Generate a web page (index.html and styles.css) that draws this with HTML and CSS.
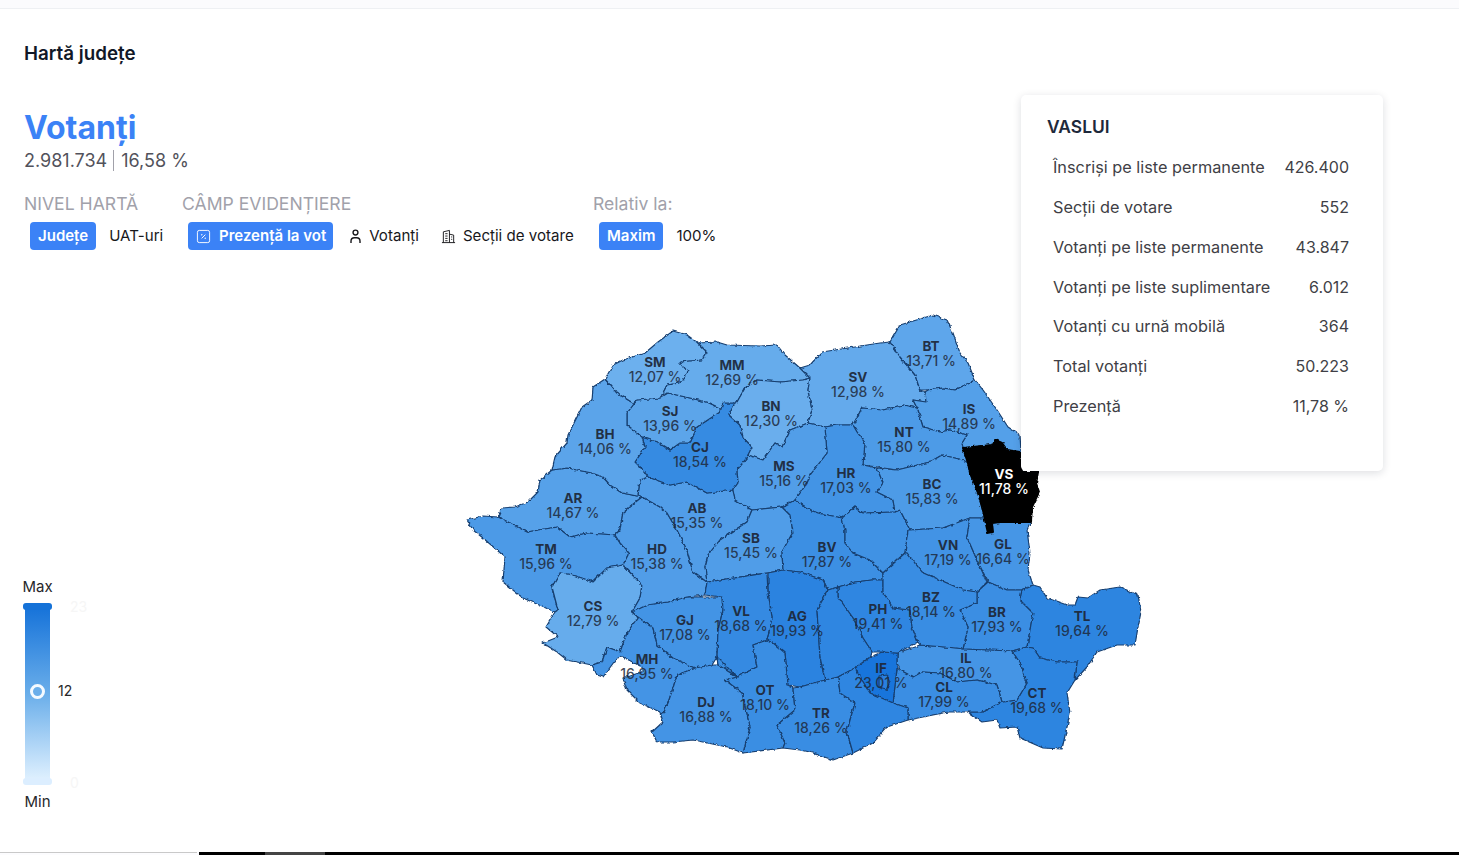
FILE: index.html
```html
<!DOCTYPE html>
<html lang="ro">
<head>
<meta charset="utf-8">
<title>Hartă județe</title>
<link rel="stylesheet" href="styles.css">
</head>
<body>
<div class="page">
  <div class="topstrip"></div>
  <h2 class="page-title">Hartă județe</h2>
  <section class="summary">
    <h1 class="summary-title">Votanți</h1>
    <p class="summary-sub">2.981.734<span class="sep"></span>16,58 %</p>
  </section>
  <section class="filters">
    <div class="group group-level">
      <div class="group-label">NIVEL HARTĂ</div>
      <div class="group-btns">
        <span class="btn active">Județe</span>
        <span class="btn">UAT-uri</span>
      </div>
    </div>
    <div class="group group-field">
      <div class="group-label">CÂMP EVIDENȚIERE</div>
      <div class="group-btns">
        <span class="btn active btn-icon"><svg class="ico" viewBox="0 0 16 16" fill="none" stroke="currentColor" stroke-width="1"><rect x="1.5" y="1.5" width="13" height="13" rx="2"/><path d="M10 6 6 10"/><circle cx="6.2" cy="6.2" r=".4"/><circle cx="9.8" cy="9.8" r=".4"/></svg>Prezență la vot</span>
        <span class="btn"><svg class="ico" viewBox="0 0 16 16" fill="none" stroke="currentColor" stroke-width="1.5"><circle cx="8" cy="3.8" r="2.6"/><path d="M3.2 15v-2a3.6 3.6 0 0 1 3.6-3.6h2.4a3.6 3.6 0 0 1 3.6 3.6v2"/></svg>Votanți</span>
        <span class="btn"><svg class="ico" viewBox="0 0 16 16" fill="none" stroke="currentColor" stroke-width="1"><path d="M1 14.5h14M2.5 14.5V3l6.500-1.500v13M9 5.500l4.500 1v8M4.500 5h2.500M4.500 7.500h2.500M4.500 10h2.500M4.500 12.500h2.500M10.800 8.500h1.200M10.800 11h1.200"/></svg>Secții de votare</span>
      </div>
    </div>
    <div class="group group-rel">
      <div class="group-label">Relativ la:</div>
      <div class="group-btns">
        <span class="btn active">Maxim</span>
        <span class="btn">100%</span>
      </div>
    </div>
  </section>
  <main class="stage">
    <aside class="legend">
      <div class="legend-cap">Max</div>
      <div class="legend-bar">
        <span class="handle handle-top"></span>
        <span class="tick tick-max">23</span>
        <span class="thumb"></span>
        <span class="tick tick-val">12</span>
        <span class="handle handle-bot"></span>
        <span class="tick tick-min">0</span>
      </div>
      <div class="legend-cap legend-min">Min</div>
    </aside>
    <svg class="map" viewBox="460 310 690 460" width="690" height="460" role="img" aria-label="Harta României pe județe">
      <defs>
        <filter id="rough" x="-2%" y="-2%" width="104%" height="104%" color-interpolation-filters="sRGB">
          <feTurbulence type="fractalNoise" baseFrequency="0.22" numOctaves="2" seed="4"/>
          <feColorMatrix type="matrix" values="1 0 0 0 0  0 1 0 0 0  0 0 1 0 0  0 0 0 0 1" result="noise"/>
          <feDisplacementMap in="SourceGraphic" in2="noise" scale="3.5" xChannelSelector="R" yChannelSelector="G"/>
        </filter>
      </defs>
      <g class="counties" filter="url(#rough)">
        <polygon fill="#56a1e9" points="498,517 502,508 515,507 528,502 538,492 540,480 552,470 567,468 592,473 603,477 610,485 622,493 642,497 623,512 620,530 615,535 587,533 570,537 557,527 527,532 500,518"/>
        <polygon fill="#4c9ae7" points="467,520 483,516 498,517 500,518 527,532 557,527 570,537 587,533 615,535 620,543 629,553 623,565 607,568 593,582 573,575 560,573 552,587 558,610 555,612 523,598 503,582 505,557 483,538 473,530"/>
        <polygon fill="#66acec" points="555,612 558,610 552,587 560,573 573,575 593,582 607,568 623,565 642,585 640,598 632,612 638,617 627,633 620,652 607,647 602,662 592,665 567,660 557,652 543,643 558,637 546,627"/>
        <polygon fill="#4494e5" points="592,665 602,662 607,647 620,652 627,633 638,617 653,628 657,645 673,658 695,668 677,675 673,688 668,703 663,713 660,712 640,703 627,690 623,678 642,672 642,667 623,657 617,658 603,677 597,675"/>
        <polygon fill="#4394e5" points="632,612 647,605 667,602 687,597 722,597 723,610 718,630 717,657 712,665 695,668 673,658 657,645 653,628 638,617"/>
        <polygon fill="#519de8" points="642,497 660,507 667,513 677,530 687,550 693,572 707,582 705,595 687,597 667,602 647,605 632,612 640,598 642,585 623,565 629,553 620,543 615,535 620,530 623,512"/>
        <polygon fill="#519de8" points="642,497 638,495 640,480 648,477 670,485 687,482 707,493 733,490 735,500 752,510 747,522 720,540 708,555 705,567 707,582 693,572 687,550 677,530 667,513 660,507"/>
        <polygon fill="#368be2" points="642,437 657,442 670,450 680,443 690,443 697,427 720,412 723,403 735,403 729,415 740,425 743,437 752,447 747,458 737,470 738,483 733,490 707,493 687,482 670,485 648,477 643,470 635,462 645,447"/>
        <polygon fill="#5ca5ea" points="642,437 627,425 627,413 637,400 660,398 668,393 690,398 707,402 720,408 720,412 697,427 690,443 680,443 670,450 657,442"/>
        <polygon fill="#5ba4ea" points="552,470 555,457 567,443 568,435 582,407 592,400 593,387 605,379 617,393 633,403 637,400 627,413 627,425 642,437 645,447 635,462 643,470 648,477 640,480 638,495 642,497 622,493 610,485 603,477 592,473 567,468"/>
        <polygon fill="#6cb0ee" points="605,379 613,365 623,360 645,353 658,342 673,331 687,335 698,343 707,352 702,360 680,362 688,372 680,383 667,385 662,395 660,398 637,400 633,403 617,393"/>
        <polygon fill="#66acec" points="698,343 717,342 727,345 760,346 777,345 785,355 800,368 810,378 803,380 780,382 757,380 745,388 737,402 735,403 723,403 720,408 707,402 690,398 668,393 662,395 667,385 680,383 688,372 680,362 702,360 707,352"/>
        <polygon fill="#6aaeed" points="757,380 780,382 803,380 810,378 808,390 812,410 808,423 790,430 782,447 775,443 763,460 748,455 752,447 743,437 740,425 729,415 735,403 737,402 745,388"/>
        <polygon fill="#64aaec" points="800,368 810,365 822,352 880,343 890,342 900,357 915,375 920,390 925,392 926,402 913,400 917,408 903,405 883,410 862,408 853,425 837,425 825,427 808,423 812,410 808,390 810,378"/>
        <polygon fill="#5ea6eb" points="890,342 900,325 933,315 947,320 953,333 960,353 968,363 975,380 955,390 943,388 928,390 920,390 915,375 900,357"/>
        <polygon fill="#54a0e9" points="975,380 983,390 997,410 1008,427 1020,435 1021,452 1007,450 1002,443 995,440 992,445 963,448 962,443 967,435 950,430 940,432 923,427 917,408 913,400 926,402 925,392 928,390 943,388 955,390"/>
        <polygon fill="#4d9be7" points="862,408 883,410 903,405 917,408 923,427 940,432 950,430 967,435 962,443 963,448 968,463 963,460 942,455 930,462 897,470 877,467 863,465 865,443 857,432 853,425"/>
        <polygon fill="#4394e5" points="825,427 837,425 853,425 857,432 865,443 863,465 877,468 883,483 877,492 893,500 895,512 863,513 855,507 842,518 818,513 810,510 795,500 807,483 810,475 827,453"/>
        <polygon fill="#529ee8" points="748,455 763,460 775,443 782,447 790,430 808,423 825,427 827,453 810,475 807,483 795,500 782,507 752,510 735,500 733,490 738,483 737,470 747,458"/>
        <polygon fill="#509de8" points="752,510 782,507 790,515 793,532 782,552 783,570 767,573 707,582 705,567 708,555 720,540 747,522"/>
        <polygon fill="#3c8fe3" points="782,507 795,500 810,510 818,513 842,518 845,530 845,543 853,553 870,560 883,573 883,580 872,580 855,582 838,587 828,590 823,580 800,572 783,570 782,552 793,532 790,515"/>
        <polygon fill="#4092e4" points="855,507 863,513 895,512 900,510 910,530 908,530 905,553 883,573 870,560 853,553 845,543 845,530 842,518"/>
        <polygon fill="#4d9be7" points="877,468 897,470 930,462 942,455 963,460 968,463 970,473 978,493 982,507 985,518 970,518 943,528 910,530 900,510 895,512 893,500 877,492 883,483"/>
        <polygon fill="#4293e5" points="910,530 943,528 970,518 967,537 977,560 987,582 977,592 963,590 940,580 922,572 907,553 905,553 908,530"/>
        <polygon fill="#4696e6" points="970,518 985,518 992,523 1000,522 1031,522 1027,530 1030,553 1028,570 1033,585 1022,590 1007,590 988,582 977,560 967,537"/>
        <polygon fill="#3b8ee3" points="988,582 1007,590 1022,590 1020,600 1033,613 1030,630 1027,647 1012,651 963,649 968,627 960,610 977,603 977,592"/>
        <polygon fill="#2d85e0" points="1033,585 1040,587 1047,598 1067,605 1075,605 1078,597 1088,598 1100,590 1120,587 1138,595 1141,612 1138,627 1135,645 1117,645 1097,652 1087,667 1075,680 1077,662 1057,662 1040,658 1033,648 1027,647 1030,630 1033,613 1020,600 1022,590"/>
        <polygon fill="#2d85e0" points="1012,651 1027,647 1033,648 1040,658 1057,662 1077,662 1075,680 1067,693 1070,713 1067,727 1062,749 1043,748 1020,738 1017,727 1000,728 997,720 982,722 968,712 982,712 1002,702 1017,700 1027,683 1020,663"/>
        <polygon fill="#4595e5" points="897,653 920,645 957,648 963,649 1012,651 1020,663 1027,683 1017,700 1002,702 997,685 977,680 957,682 940,673 922,672 913,677 900,670 897,663"/>
        <polygon fill="#3b8ee3" points="897,668 900,670 913,677 922,672 940,673 957,682 977,680 997,685 1002,702 982,712 968,712 948,712 908,720 908,708 893,703"/>
        <polygon fill="#1875dc" points="855,668 870,657 882,652 897,653 897,668 893,703 870,693 860,677"/>
        <polygon fill="#2a80e0" points="879,676 887,675 890,682 886,690 879,688"/>
        <polygon fill="#2f86e1" points="838,587 855,582 872,580 883,580 883,592 893,608 910,610 912,627 918,642 897,653 882,652 872,652 863,638 853,618 838,597"/>
        <polygon fill="#398de3" points="883,580 883,573 905,553 907,553 922,572 940,580 963,590 977,592 977,603 960,610 968,627 963,649 957,648 920,645 918,642 912,627 910,610 893,608 883,592"/>
        <polygon fill="#2b83e0" points="768,573 783,570 800,572 823,580 828,590 817,610 820,657 825,680 800,687 788,685 785,653 772,642 767,640 772,617 768,593"/>
        <polygon fill="#358ae2" points="707,582 767,573 768,593 772,617 767,640 753,645 757,667 737,677 718,665 717,657 718,630 723,610 722,597 705,595"/>
        <polygon fill="#3a8ee3" points="717,657 718,665 737,677 757,667 753,645 767,640 772,642 785,653 788,685 793,688 795,710 777,725 785,743 783,748 743,753 750,727 742,693 725,680 737,677"/>
        <polygon fill="#4494e5" points="695,668 712,665 718,665 737,677 725,680 742,693 750,727 743,753 727,747 693,740 673,742 657,742 652,732 663,722 660,712 663,713 668,703 673,688 677,675"/>
        <polygon fill="#398de3" points="793,688 800,687 825,680 838,677 840,693 855,703 850,720 847,732 853,753 833,760 813,753 800,750 783,748 785,743 777,725 795,710"/>
        <polygon fill="#2f86e1" points="828,590 838,587 838,597 853,618 863,638 872,652 870,657 855,668 838,677 825,680 820,657 817,610"/>
        <polygon fill="#2f86e1" points="838,677 855,668 860,677 870,693 893,703 908,708 908,720 887,727 873,743 853,753 847,732 850,720 855,703 840,693"/>
        <polygon class="selected" points="963,448 992,445 995,440 1002,443 1007,450 1020,452 1022,472 1038,472 1036,483 1039,492 1032,507 1031,522 1000,522 992,523 993,532 988,533 985,520 982,507 978,493 970,473 968,463"/>
      </g>
      <g class="labels">
        <text x="655" y="367" class="code">SM</text><text x="655" y="382">12,07 %</text>
        <text x="732" y="370" class="code">MM</text><text x="732" y="385">12,69 %</text>
        <text x="771" y="411" class="code">BN</text><text x="771" y="426">12,30 %</text>
        <text x="670" y="416" class="code">SJ</text><text x="670" y="431">13,96 %</text>
        <text x="605" y="439" class="code">BH</text><text x="605" y="454">14,06 %</text>
        <text x="700" y="452" class="code">CJ</text><text x="700" y="467">18,54 %</text>
        <text x="784" y="471" class="code">MS</text><text x="784" y="486">15,16 %</text>
        <text x="846" y="478" class="code">HR</text><text x="846" y="493">17,03 %</text>
        <text x="904" y="437" class="code">NT</text><text x="904" y="452">15,80 %</text>
        <text x="969" y="414" class="code">IS</text><text x="969" y="429">14,89 %</text>
        <text x="931" y="351" class="code">BT</text><text x="931" y="366">13,71 %</text>
        <text x="858" y="382" class="code">SV</text><text x="858" y="397">12,98 %</text>
        <text x="932" y="489" class="code">BC</text><text x="932" y="504">15,83 %</text>
        <text x="1004" y="479" class="code light">VS</text><text x="1004" y="494" class="light">11,78 %</text>
        <text x="573" y="503" class="code">AR</text><text x="573" y="518">14,67 %</text>
        <text x="697" y="513" class="code">AB</text><text x="697" y="528">15,35 %</text>
        <text x="751" y="543" class="code">SB</text><text x="751" y="558">15,45 %</text>
        <text x="827" y="552" class="code">BV</text><text x="827" y="567">17,87 %</text>
        <text x="948" y="550" class="code">VN</text><text x="948" y="565">17,19 %</text>
        <text x="1003" y="549" class="code">GL</text><text x="1003" y="564">16,64 %</text>
        <text x="546" y="554" class="code">TM</text><text x="546" y="569">15,96 %</text>
        <text x="657" y="554" class="code">HD</text><text x="657" y="569">15,38 %</text>
        <text x="593" y="611" class="code">CS</text><text x="593" y="626">12,79 %</text>
        <text x="685" y="625" class="code">GJ</text><text x="685" y="640">17,08 %</text>
        <text x="741" y="616" class="code">VL</text><text x="741" y="631">18,68 %</text>
        <text x="797" y="621" class="code">AG</text><text x="797" y="636">19,93 %</text>
        <text x="878" y="614" class="code">PH</text><text x="878" y="629">19,41 %</text>
        <text x="931" y="602" class="code">BZ</text><text x="931" y="617">18,14 %</text>
        <text x="997" y="617" class="code">BR</text><text x="997" y="632">17,93 %</text>
        <text x="1082" y="621" class="code">TL</text><text x="1082" y="636">19,64 %</text>
        <text x="647" y="664" class="code">MH</text><text x="647" y="679">16,95 %</text>
        <text x="966" y="663" class="code">IL</text><text x="966" y="678">16,80 %</text>
        <text x="706" y="707" class="code">DJ</text><text x="706" y="722">16,88 %</text>
        <text x="765" y="695" class="code">OT</text><text x="765" y="710">18,10 %</text>
        <text x="821" y="718" class="code">TR</text><text x="821" y="733">18,26 %</text>
        <text x="944" y="692" class="code">CL</text><text x="944" y="707">17,99 %</text>
        <text x="1037" y="698" class="code">CT</text><text x="1037" y="713">19,68 %</text>
        <text x="881" y="673" class="code">IF</text><text x="881" y="688">23,01 %</text>
      </g>
    </svg>
    <aside class="tooltip">
      <h3 class="tooltip-title">VASLUI</h3>
      <dl class="stats">
        <div class="stat"><dt>Înscriși pe liste permanente</dt><dd>426.400</dd></div>
        <div class="stat"><dt>Secții de votare</dt><dd>552</dd></div>
        <div class="stat"><dt>Votanți pe liste permanente</dt><dd>43.847</dd></div>
        <div class="stat"><dt>Votanți pe liste suplimentare</dt><dd>6.012</dd></div>
        <div class="stat"><dt>Votanți cu urnă mobilă</dt><dd>364</dd></div>
        <div class="stat"><dt>Total votanți</dt><dd>50.223</dd></div>
        <div class="stat"><dt>Prezență</dt><dd>11,78 %</dd></div>
      </dl>
    </aside>
  </main>
  <div class="bottomstrip"><span class="seg-line"></span><span class="seg-black"></span><span class="seg-grey"></span><span class="seg-rest"></span></div>
</div>
</body>
</html>
```
FILE: styles.css
```css
* { box-sizing: border-box; }
html, body { margin: 0; padding: 0; background: #fff; }
body { font-family: Inter, "Noto Sans", sans-serif; color: #27272a; }
.page { width: 1459px; height: 855px; overflow: hidden; display: flex; flex-direction: column; position: relative; }

.topstrip { height: 9px; flex: none; background: #fbfbfd; border-bottom: 1px solid #eef0f3; }

.page-title { margin: 33px 0 0 24px; font-size: 18.8px; line-height: 24px; font-weight: 600; color: #111827; }

.summary { margin: 42px 0 0 24px; }
.summary-title { margin: 0; font-size: 32px; line-height: 40px; font-weight: 700; color: #3b82f6; }
.summary-sub { margin: 0; font-size: 18px; line-height: 25px; color: #52525b; display: flex; align-items: center; }
.sep { width: 1px; height: 21px; background: #a1a1aa; margin: 0 7px 0 6px; }

.filters { display: flex; margin: 19px 0 0 24px; }
.group-label { font-size: 17.6px; line-height: 24px; color: #a1a1aa; white-space: nowrap; }
.group-btns { display: flex; align-items: center; height: 28px; margin-top: 6px; padding-left: 6px; gap: 13px; }
.group-level { width: 158px; }
.group-field { width: 411px; }
.group-field .group-btns { gap: 15px; }
.group-field .btn + .btn + .btn { margin-left: 7px; gap: 7px; }
.btn { display: inline-flex; align-items: center; gap: 6px; font-size: 15.1px; line-height: 28px; height: 28px; font-weight: 400; color: #18181b; white-space: nowrap; }
.btn.active { background: #3b82f6; color: #fff; font-size: 15px; font-weight: 600; padding: 0 8px; border-radius: 4px; }
.btn.btn-icon { gap: 8px; padding-right: 7px; }
.btn:not(.active) { padding: 0; }
.ico { width: 15px; height: 15px; flex: none; }

.stage { flex: 1; position: relative; display: flex; min-height: 0; }
.legend { flex: none; width: 75px; margin-left: 0; align-self: flex-end; display: flex; flex-direction: column; align-items: flex-start; padding: 0 0 43px 23px; }
.legend-cap { width: 29px; text-align: center; font-size: 15px; line-height: 20px; color: #27272a; white-space: nowrap; display: flex; justify-content: center; }
.legend-min { margin-top: 10px; }
.legend-bar { position: relative; width: 25px; height: 176px; margin: 9px 0 0 2px; background: linear-gradient(#1572d9 0%, #6aaeea 50%, #e2f2ff 100%); }
.handle { position: absolute; left: -2px; width: 29px; height: 7px; border-radius: 3px; }
.handle-top { top: -3px; background: #1572d8; }
.handle-bot { bottom: -3px; background: #dceeff; }
.thumb { position: absolute; left: 5px; top: 78px; width: 15px; height: 15px; border: 3px solid #f4faff; border-radius: 50%; background: #6aaeea; }
.tick { position: absolute; font-size: 14px; line-height: 16px; left: 33px; color: #27272a; }
.tick-val { top: 77px; }
.tick-max { top: -7px; left: 45px; color: #f6f6f6; }
.tick-min { bottom: -9px; left: 45px; color: #f6f6f6; }

.map { flex: none; margin: 60px 0 0 385px; display: block; }
.counties polygon { stroke: #173f70; stroke-width: 1.2; stroke-linejoin: round; }
.counties .selected { fill: #000; stroke: #000; stroke-width: 2; }
.labels text { font-family: Inter, "Noto Sans", sans-serif; font-size: 14px; font-weight: 500; fill: #1e293b; fill-opacity: .85; text-anchor: middle; }
.labels .code { font-size: 13.5px; font-weight: 700; fill-opacity: .95; }
.labels .light { fill: #fff; fill-opacity: 1; }

.tooltip { position: absolute; left: 1021px; top: -155px; width: 362px; height: 376px; background: #fff; border-radius: 5px; box-shadow: 0 2px 8px rgba(15, 23, 42, .14); padding: 21px 34px 0 26px; }
.tooltip-title { margin: 0; font-size: 17.4px; line-height: 22px; font-weight: 600; color: #1e293b; }
.stats { margin: 9.3px 0 0 6px; }
.stat { display: flex; justify-content: space-between; align-items: center; height: 39.8px; font-size: 16.3px; color: #3f3f46; }
.stat dt, .stat dd { margin: 0; white-space: nowrap; }
.stat dd { font-size: 16px; }

.bottomstrip { position: absolute; left: 0; right: 0; bottom: 0; height: 3px; display: flex; background: #fcfcfe; }
.seg-line { width: 197px; border-top: 1px solid #c9c9c9; }
.seg-black { width: 66px; background: #000; margin-left: 2px; }
.seg-grey { width: 60px; background: #444; }
.seg-rest { flex: 1; background: #000; }
```
